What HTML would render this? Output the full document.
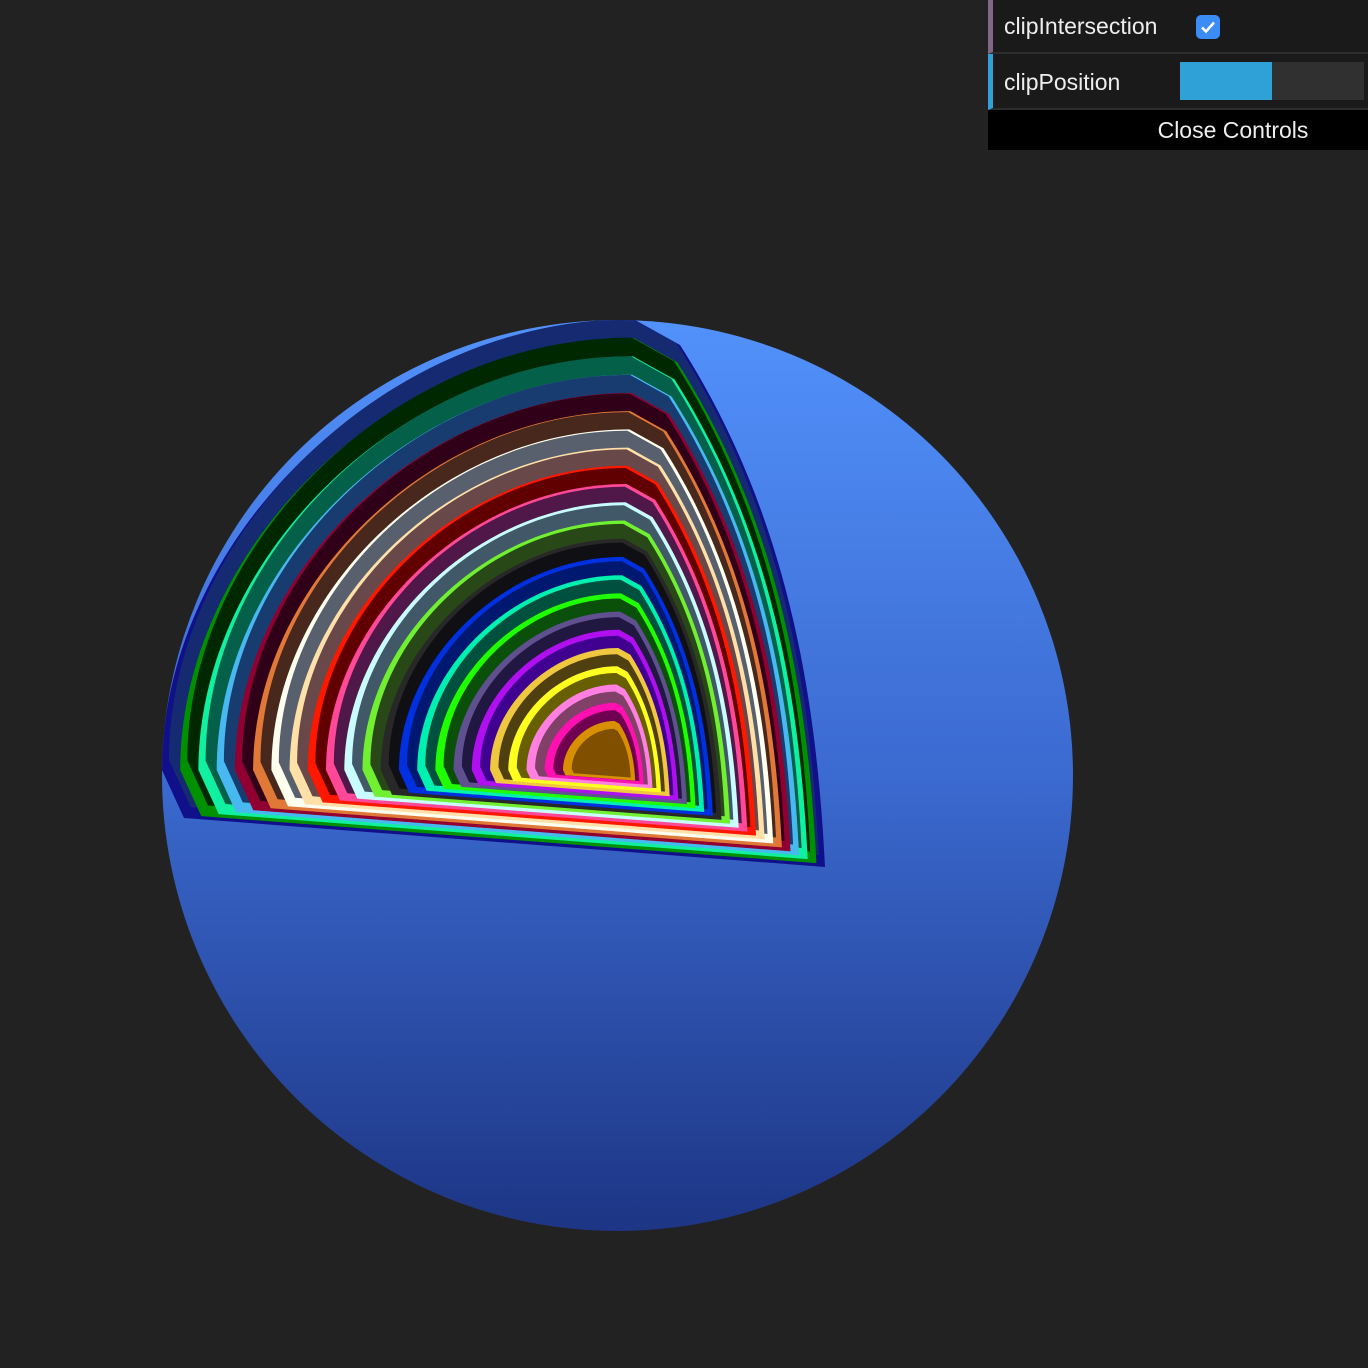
<!DOCTYPE html>
<html><head><style>
body{margin:0;background:#222;width:1368px;height:1368px;overflow:hidden;font-family:"Liberation Sans",sans-serif;position:relative}
#p{position:absolute;left:988px;top:0;width:380px;height:150px;background:#1a1a1a}
.row{position:absolute;left:0;width:380px;color:#eee;font-size:23px;box-sizing:border-box;padding-left:11px;border-bottom:2px solid #2c2c2c}
#r1{top:0;height:54px;line-height:52px;border-left:5px solid #806787}
#r2{top:54px;height:56px;line-height:56px;border-left:5px solid #2fa1d6}
#cb{position:absolute;left:203px;top:15px;width:24px;height:24px;background:#3b8cf5;border-radius:5px}
#cb svg{display:block}
#sl{position:absolute;left:187px;top:8px;width:184px;height:38px;background:#303030}
#sl div{width:92px;height:38px;background:#2fa1d6}
#cl{position:absolute;top:110px;left:0;width:380px;height:40px;background:#000;color:#eee;font-size:23px;text-align:center;line-height:40px;padding-left:110px;box-sizing:border-box}
</style></head><body>
<svg width="1368" height="1368" style="position:absolute;left:0;top:0">
<defs><linearGradient id="g" x1="0" y1="0" x2="0" y2="1"><stop offset="0" stop-color="#5291fb"/><stop offset="0.5" stop-color="#3b6ad0"/><stop offset="1" stop-color="#1d3584"/></linearGradient>
<clipPath id="outer"><circle cx="617.5" cy="775.5" r="455.5"/></clipPath></defs>
<circle cx="617.5" cy="775.5" r="455.5" fill="url(#g)"/>
<g id="sh" clip-path="url(#outer)"></g>
</svg>
<div id="p">
<div class="row" id="r1">clipIntersection<div id="cb"><svg width="24" height="24"><path d="M6 12.5l4 4 8-9" stroke="#fff" stroke-width="2.5" fill="none"/></svg></div></div>
<div class="row" id="r2">clipPosition<div id="sl"><div></div></div></div>
<div id="cl">Close Controls</div>
</div>
<script>
var cols=[["#10108a","#162a72"],["#009000","#002800"],["#10f0a0","#05604a"],["#48b8f0","#183c70"],["#900030","#300018"],["#e07838","#48281c"],["#fffff0","#58606e"],["#ffe0a8","#684848"],["#ff1800","#600000"],["#ff4898","#501848"],["#c8fcff","#405868"],["#70f030","#284818"],["#282828","#101014"],["#0030e0","#001870"],["#00f0b0","#005040"],["#20ff00","#0a500a"],["#605090","#201840"],["#b010f0","#400090"],["#f0c840","#504010"],["#ffff20","#686000"],["#ff80e0","#804068"],["#ff10b0","#700050"],["#d89000","#805000"]];
function path(s,dx,dy){var cx=612+dx,cy=770+dy;function p(x,y){return (cx+x*s).toFixed(1)+","+(cy+y*s).toFixed(1)}
return "M"+p(-428,48)+"L"+p(213,97)+"C"+p(205,-60)+" "+p(180,-250)+" "+p(68,-425)+"L"+p(23,-450)+"C"+p(-230,-450)+" "+p(-450,-230)+" "+p(-450,0)+"Z";}
var h="";
for(var i=0;i<cols.length;i++){var s=1-i*0.0405;
h+='<path d="'+path(s,0,0)+'" fill="'+cols[i][0]+'"/>';
h+='<path d="'+path(s-0.02,-2*s,-10*s)+'" fill="'+cols[i][1]+'"/>';}
document.getElementById("sh").innerHTML=h;
</script>
</body></html>
